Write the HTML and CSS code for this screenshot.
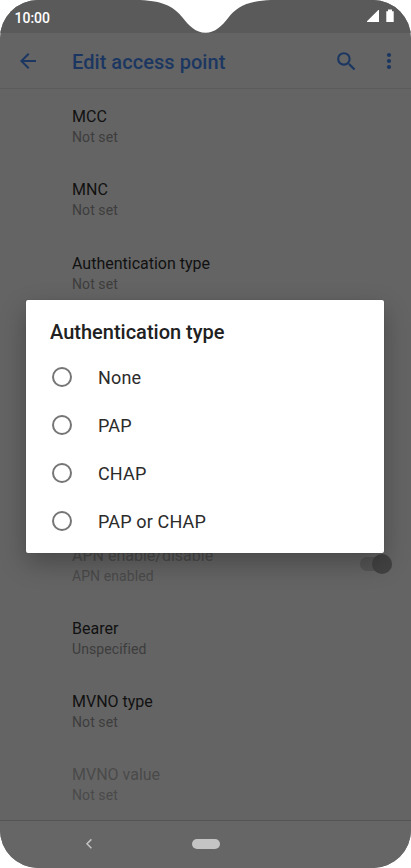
FILE: index.html
```html
<!DOCTYPE html>
<html lang="en">
<head>
    <meta charset="UTF-8">
    <meta name="viewport" content="width=device-width, initial-scale=1.0">
    <title>Edit access point</title>
    <link rel="stylesheet" href="styles.css">
</head>
<body>
    <div class="phone">
        <div class="status-bar">
            <span class="clock">10:00</span>
            <svg class="status-icons" width="28" height="14" viewBox="0 0 28 14">
                <path d="M0 13V12.3L11.3 1H12V13Z" fill="#fff"/>
                <path d="M19.3 2.2H21V0.5H25V2.2H26.7V13H19.3Z" fill="#fff"/>
            </svg>
        </div>
        <svg class="notch" width="132" height="34" viewBox="0 0 132 34">
            <path d="M0 0C25 1 35 8 42.5 17.5C49 26 56 32.7 65.5 32.7C75 32.7 82 26 88.5 17.5C96 8 106 1 131 0Z" fill="#fff"/>
        </svg>

        <header class="toolbar">
            <svg class="back" width="24" height="24" viewBox="0 0 24 24">
                <path d="M20 11H7.83l5.59-5.59L12 4l-8 8 8 8 1.41-1.41L7.83 13H20v-2z"/>
            </svg>
            <h1>Edit access point</h1>
            <svg class="search" width="25" height="25" viewBox="0 0 24 24">
                <path d="M15.5 14h-.79l-.28-.27A6.47 6.47 0 0 0 16 9.5 6.5 6.5 0 1 0 9.5 16c1.61 0 3.09-.59 4.23-1.57l.27.28v.79l5 4.99L20.49 19l-4.99-5zm-6 0a4.5 4.5 0 1 1 0-9 4.5 4.5 0 0 1 0 9z"/>
            </svg>
            <svg class="more" width="24" height="24" viewBox="0 0 24 24">
                <circle cx="12" cy="6" r="2.1"/>
                <circle cx="12" cy="12" r="2.1"/>
                <circle cx="12" cy="18" r="2.1"/>
            </svg>
        </header>

        <main class="settings">
            <div class="item">
                <div class="name">MCC</div>
                <div class="value">Not set</div>
            </div>
            <div class="item">
                <div class="name">MNC</div>
                <div class="value">Not set</div>
            </div>
            <div class="item">
                <div class="name">Authentication type</div>
                <div class="value">Not set</div>
            </div>
            <div class="item covered"></div>
            <div class="item disabled with-switch">
                <div>
                    <div class="name">APN enable/disable</div>
                    <div class="value">APN enabled</div>
                </div>
                <div class="switch"><div class="thumb"></div></div>
            </div>
            <div class="item">
                <div class="name">Bearer</div>
                <div class="value">Unspecified</div>
            </div>
            <div class="item">
                <div class="name">MVNO type</div>
                <div class="value">Not set</div>
            </div>
            <div class="item disabled">
                <div class="name">MVNO value</div>
                <div class="value">Not set</div>
            </div>
        </main>

        <nav class="nav-bar">
            <svg class="nav-back" width="8" height="12" viewBox="0 0 8 12">
                <path d="M6.4 1.4L2 5.8L6.4 10.2" fill="none" stroke="#c4c4c4" stroke-width="1.5"/>
            </svg>
            <div class="home"></div>
        </nav>

        <div class="dialog">
            <h2>Authentication type</h2>
            <div class="option"><span class="radio"></span>None</div>
            <div class="option"><span class="radio"></span>PAP</div>
            <div class="option"><span class="radio"></span>CHAP</div>
            <div class="option"><span class="radio"></span>PAP or CHAP</div>
        </div>
    </div>
</body>
</html>
```
FILE: styles.css
```css
* {
    box-sizing: border-box;
}

body {
    margin: 0;
    background-color: #fff;
    font-family: Roboto, sans-serif;
}

.phone {
    position: relative;
    display: flex;
    flex-direction: column;
    width: 411px;
    height: 868px;
    border-radius: 38px;
    overflow: hidden;
    background-color: #646464;
}

.status-bar {
    display: flex;
    justify-content: space-between;
    height: 33px;
    padding: 9px 16px 0 14.5px;
    background-color: #5a5a5a;
}

.clock {
    color: #fff;
    font-size: 14px;
    font-weight: 500;
    line-height: 18px;
}

.notch {
    position: absolute;
    top: 0;
    left: 140px;
}

.toolbar {
    display: flex;
    align-items: center;
    height: 57px;
    padding: 1px 10px 0 16px;
    border-bottom: 1px solid #5b5b5b;
    fill: #1b3761;
}

.toolbar h1 {
    flex: 1;
    margin: 1px 0 0 32px;
    color: #1b3761;
    font-size: 20px;
    font-weight: 500;
    line-height: 24px;
    letter-spacing: 0.05px;
}

.more {
    margin-left: 18px;
}

.settings {
    flex: 1;
}

.item {
    height: 73.1px;
    padding: 17px 16px 0 72px;
}

.covered {
    height: 219.3px;
}

.name {
    color: #111;
    font-size: 16px;
    line-height: 21px;
}

.value {
    color: #3d3d3d;
    font-size: 14px;
    line-height: 20px;
    letter-spacing: 0.08px;
}

.disabled .name,
.disabled .value {
    color: #4a4a4a;
}

.with-switch {
    display: flex;
    justify-content: space-between;
}

/* flow-root keeps the thumb's negative margin inside the track */
.switch {
    display: flow-root;
    width: 32px;
    height: 14px;
    margin: 12px 3px 0 0;
    border-radius: 7px;
    background-color: #555;
}

.thumb {
    width: 20px;
    height: 20px;
    margin: -3px 0 0 12px;
    border-radius: 50%;
    background-color: #424242;
}

.nav-bar {
    display: flex;
    align-items: center;
    height: 48px;
    padding: 0 0 2px 85px;
    border-top: 1px solid #555;
    background-color: #666;
}

.home {
    width: 28px;
    height: 10px;
    margin-left: 99px;
    border-radius: 5px;
    background-color: #c4c4c4;
}

.dialog {
    position: absolute;
    top: 300px;
    left: 26px;
    width: 358px;
    height: 253px;
    padding: 20px 24px 0;
    border-radius: 2px;
    background-color: #fff;
    box-shadow: 0 10px 26px rgba(0, 0, 0, 0.28), 0 0 1px rgba(0, 0, 0, 0.3);
}

.dialog h2 {
    margin: 0 0 9px;
    color: #212121;
    font-size: 20px;
    font-weight: 500;
    line-height: 24px;
}

.option {
    display: flex;
    align-items: center;
    height: 48px;
    color: #2b2b2b;
    font-size: 18px;
    letter-spacing: 0.15px;
}

.radio {
    width: 20px;
    height: 20px;
    margin: 0 26px 0 2px;
    border: 2px solid #757575;
    border-radius: 50%;
}
```
